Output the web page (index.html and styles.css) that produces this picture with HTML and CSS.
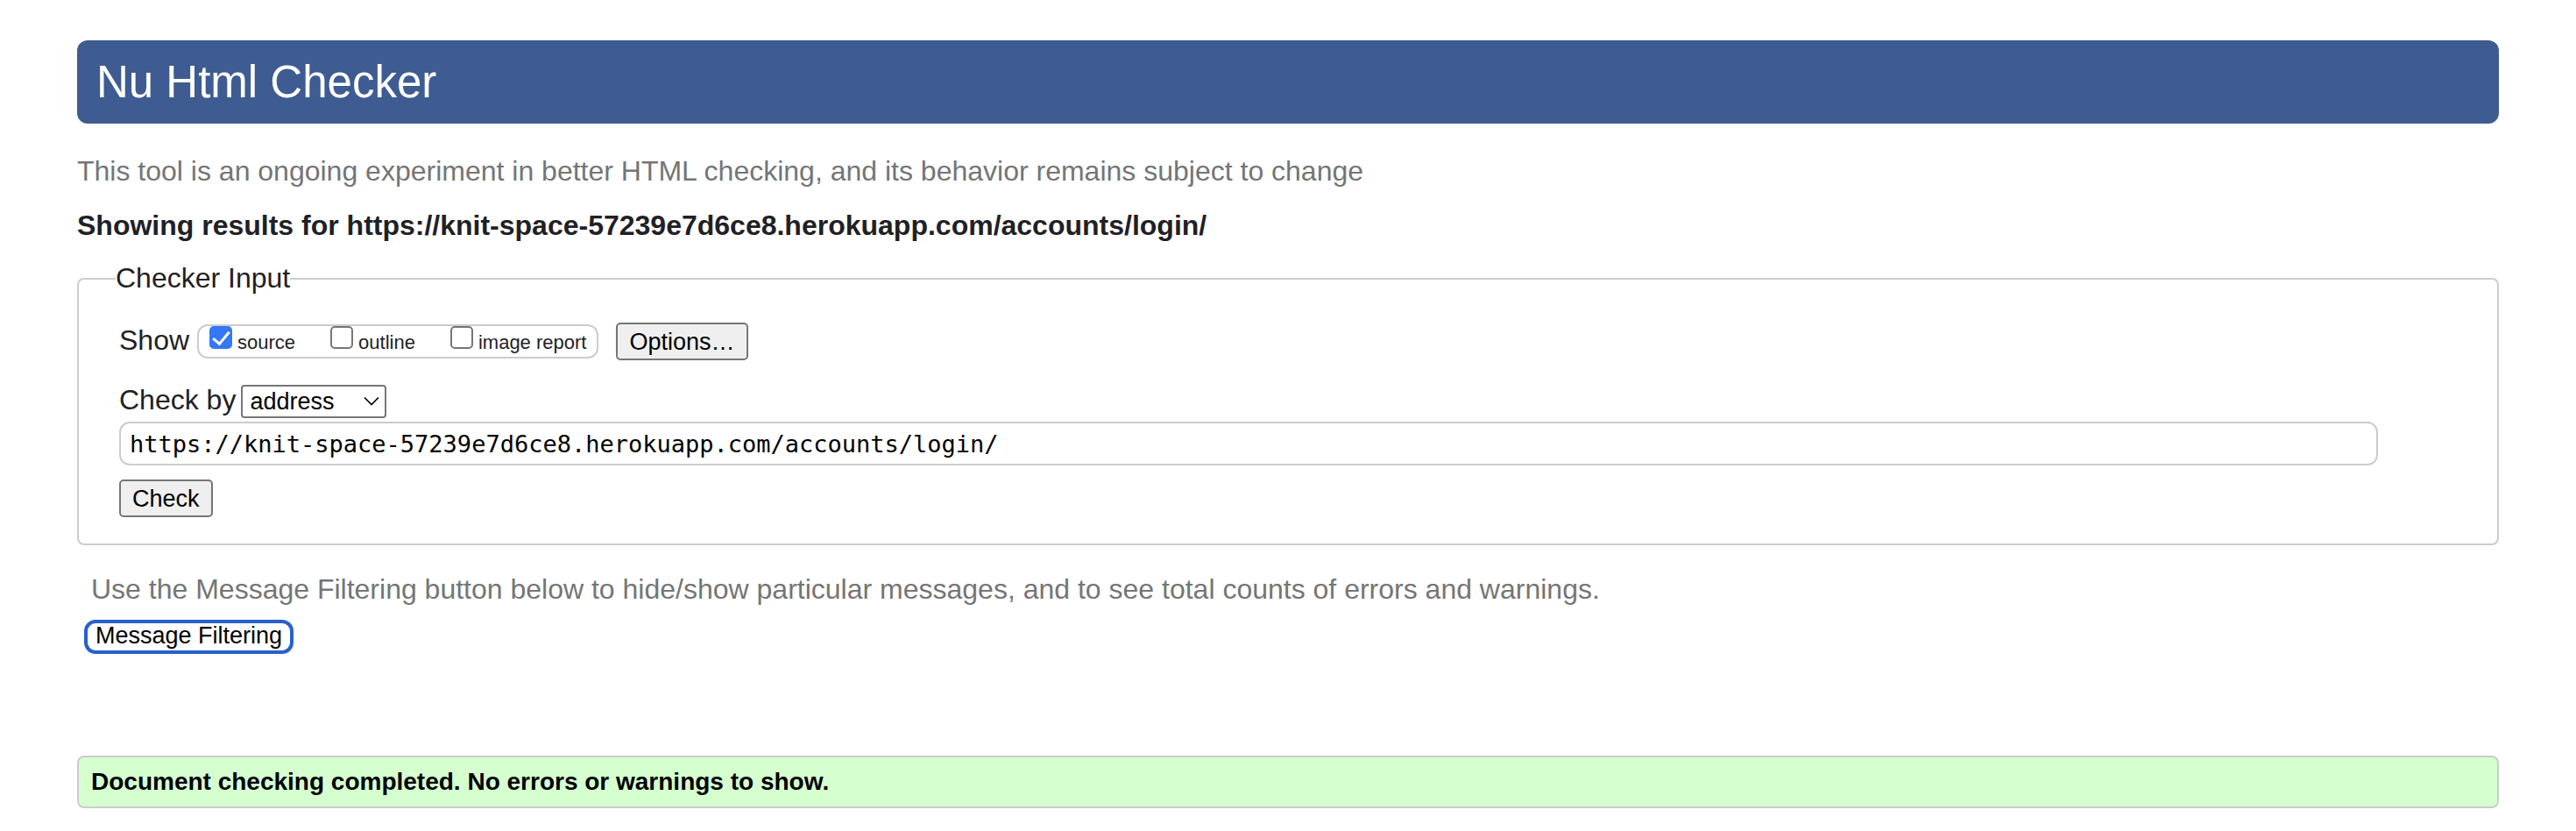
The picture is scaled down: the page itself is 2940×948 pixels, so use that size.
FILE: index.html
```html
<!DOCTYPE html>
<html lang="en">
<head>
<meta charset="utf-8">
<title>Nu Html Checker</title>
<link rel="stylesheet" href="styles.css">
</head>
<body class="page">
<header class="banner"><h1 class="banner-title">Nu Html Checker</h1></header>
<main>
<p class="note">This tool is an ongoing experiment in better HTML checking, and its behavior remains subject to change</p>
<h2 class="subject">Showing results for https://knit-space-57239e7d6ce8.herokuapp.com/accounts/login/</h2>
<form class="form">
<fieldset class="inputs">
<legend class="legend">Checker Input</legend>
<div class="row show-row">
<span class="row-label">Show</span>
<div class="checks">
<label class="check"><input class="tick" type="checkbox" name="source" checked><span class="check-text">source</span></label>
<label class="check"><input class="tick" type="checkbox" name="outline"><span class="check-text">outline</span></label>
<label class="check"><input class="tick" type="checkbox" name="images"><span class="check-text">image report</span></label>
</div>
<button class="button" type="button">Options…</button>
</div>
<div class="row method-row">
<label class="row-label" for="method">Check by</label>
<div class="select-wrap">
<select class="select" id="method"><option>address</option><option>file upload</option><option>text input</option></select>
<svg class="arrow" viewBox="0 0 18 12" aria-hidden="true"><path d="M1 1.500L9 9.500L17 1.500" fill="none" stroke="#000" stroke-width="1.700"/></svg>
</div>
</div>
<input class="address" type="url" aria-label="Address" value="https://knit-space-57239e7d6ce8.herokuapp.com/accounts/login/">
<button class="button submit" type="button">Check</button>
</fieldset>
</form>
<section class="filter">
<p class="filter-note">Use the Message Filtering button below to hide/show particular messages, and to see total counts of errors and warnings.</p>
<button class="filter-button" type="button">Message Filtering</button>
</section>
<p class="success">Document checking completed. No errors or warnings to show.</p>
</main>
</body>
</html>
```
FILE: styles.css
```css
* { box-sizing: border-box; }

.page {
  margin: 46px 88px 24px;
  background: #fff;
  color: #1f2126;
  font: 32px/36px "Liberation Sans", Arial, sans-serif;
}

.banner {
  padding: 18px 22px 17px;
  border-radius: 12px;
  background: #3e5c91;
  color: #fff;
}

.banner-title {
  margin: 0;
  font-size: 51px;
  font-weight: 400;
  line-height: 60px;
}

.note { margin: 36px 0 26px; color: #757575; }

.subject { margin: 0 0 24px; font-size: 32px; }

.form { margin: 0; }

.inputs {
  margin: 0;
  min-width: 0;
  padding: 31px 0 30px 46px;
  border: 2px solid #ccc;
  border-radius: 8px;
}

.legend { margin-left: -4px; padding: 0 0 2px; }

.row { display: flex; align-items: center; }

.row-label { padding-bottom: 4px; }

.checks {
  display: flex;
  gap: 40px;
  height: 39px;
  margin: 0 20px 0 9px;
  padding: 0 12px;
  border: 2px solid #ccc;
  border-radius: 12px;
}

.check { display: flex; gap: 6px; font-size: 22px; line-height: 38px; }

.tick {
  appearance: none;
  display: grid;
  place-items: center;
  flex: none;
  width: 26px;
  height: 26px;
  margin: 0;
  border: 2px solid #767676;
  border-radius: 5px;
  background: #fff;
}

.tick:checked { border-color: #3478f6; background: #3478f6; }

.tick:checked::after {
  content: "";
  width: 8px;
  height: 16px;
  margin-bottom: 4px;
  border: solid #fff;
  border-width: 0 3px 3px 0;
  transform: rotate(40deg);
}

.button {
  height: 43px;
  padding: 0 13px;
  border: 2px solid #767676;
  border-radius: 5px;
  background: #efefef;
  color: #000;
  font: 27px/36px "Liberation Sans", Arial, sans-serif;
}

.method-row { gap: 6px; margin: 28px 0 4px; height: 38px; }

.select-wrap { position: relative; }

.select {
  appearance: none;
  display: block;
  width: 166px;
  height: 38px;
  padding: 0 8px;
  border: 2px solid #767676;
  border-radius: 4px;
  background: #fff;
  color: #000;
  font: 27px/34px "Liberation Sans", Arial, sans-serif;
}

.arrow {
  position: absolute;
  right: 8px;
  top: 13px;
  width: 18px;
  height: 12px;
  pointer-events: none;
}

.address {
  display: block;
  width: 95%;
  height: 50px;
  padding: 0 10px;
  border: 2px solid #ccc;
  border-radius: 12px;
  background: #fff;
  color: #000;
  font: 27px/36px "DejaVu Sans Mono", monospace;
}

.submit { display: block; margin-top: 16px; }

.filter { padding: 32px 8px 0; }

.filter-note { margin: 0 0 17px; padding-left: 8px; color: #757575; }

.filter-button {
  display: block;
  height: 39px;
  padding: 0 9px 2px;
  border: 4px solid #2860cc;
  border-radius: 13px;
  background: #fff;
  color: #000;
  font: 27px/29px "Liberation Sans", Arial, sans-serif;
}

.success {
  margin: 116px 0 0;
  padding: 11px 14px;
  border: 2px solid #ccc;
  border-radius: 8px;
  background: #d6ffd0;
  color: #000;
  font-size: 28px;
  font-weight: 700;
  line-height: 34px;
}
```
